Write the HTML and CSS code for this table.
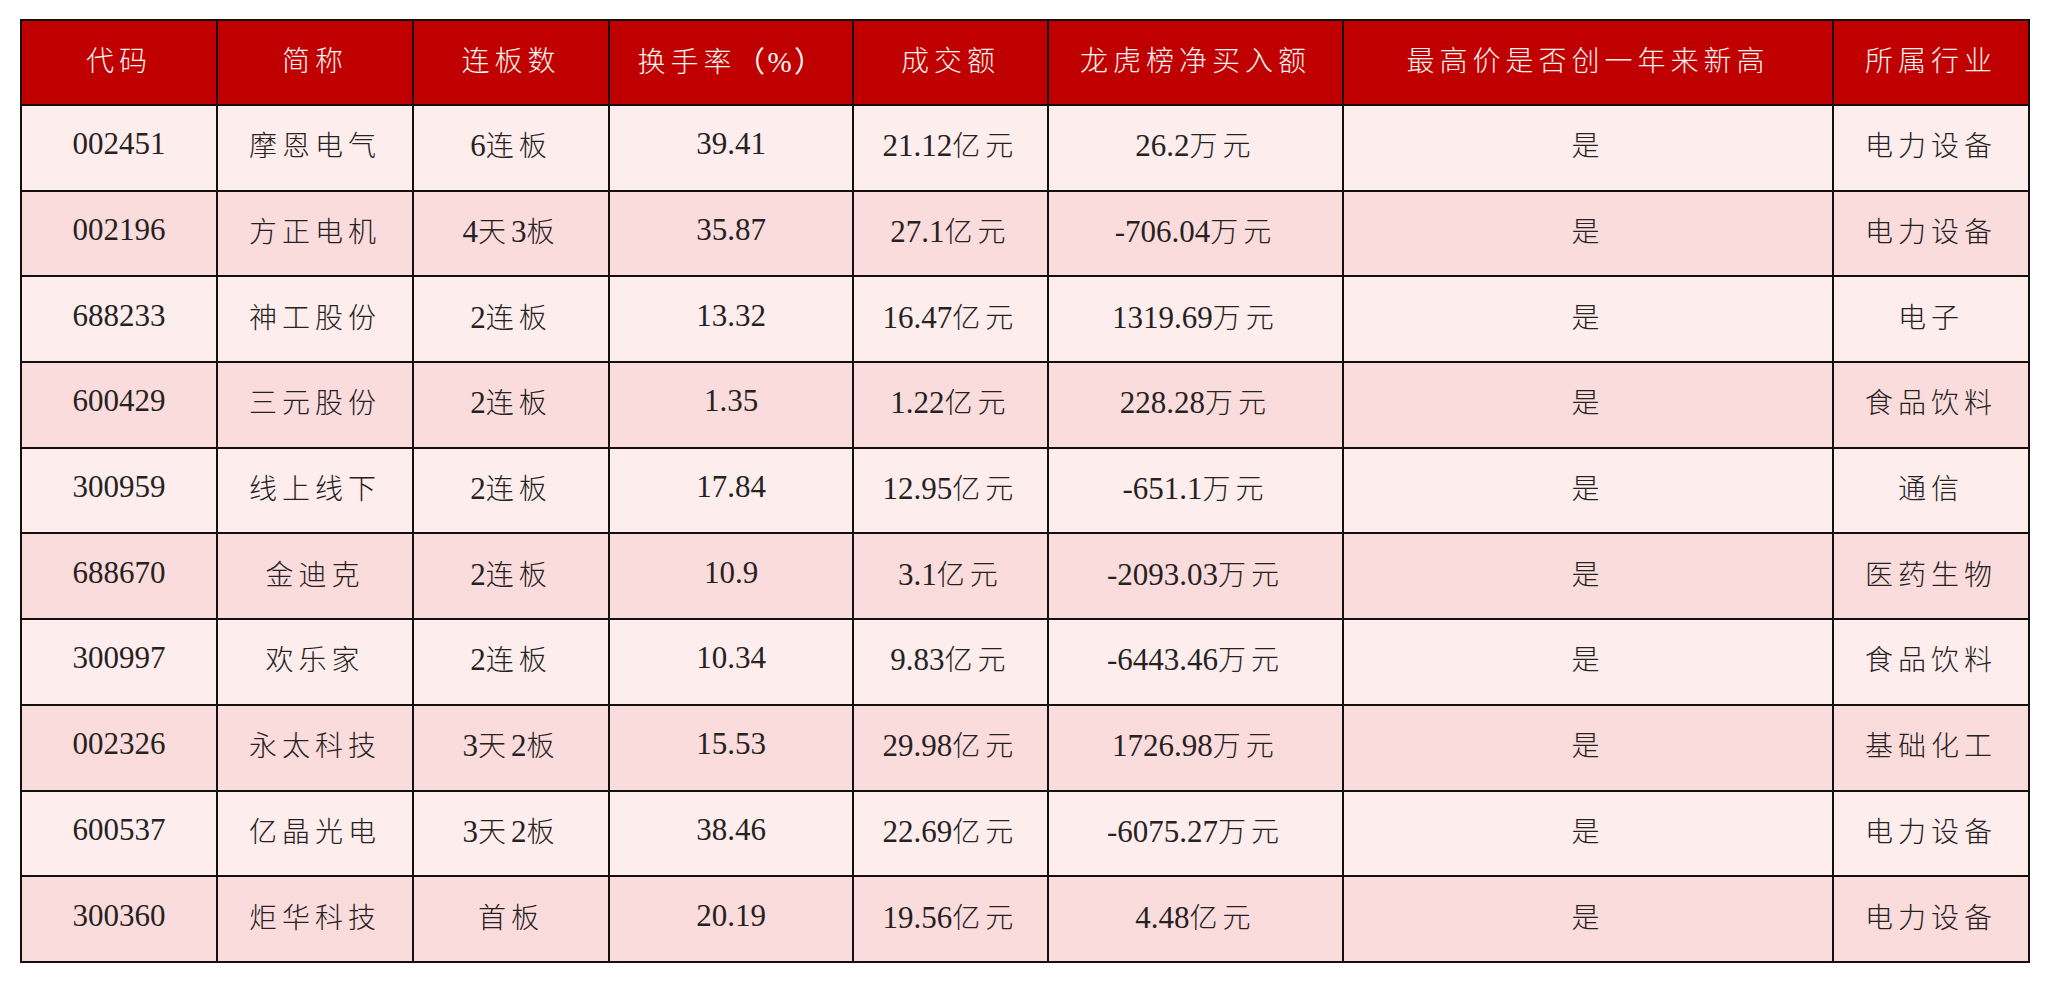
FILE: index.html
```html
<!DOCTYPE html>
<html lang="zh-CN">
<head>
<meta charset="utf-8">
<title>连板股一览</title>
<link rel="stylesheet" href="styles.css">
</head>
<body>
<table class="board">
  <colgroup>
    <col class="c-code"><col class="c-name"><col class="c-streak"><col class="c-turn"><col class="c-vol"><col class="c-lhb"><col class="c-high"><col class="c-ind">
  </colgroup>
  <thead>
    <tr>
      <th><span class="cj">代码</span></th>
      <th><span class="cj">简称</span></th>
      <th><span class="cj">连板数</span></th>
      <th><span class="cj">换手率</span><span class="pct">（%）</span></th>
      <th><span class="cj">成交额</span></th>
      <th><span class="cj">龙虎榜净买入额</span></th>
      <th><span class="cj">最高价是否创一年来新高</span></th>
      <th><span class="cj">所属行业</span></th>
    </tr>
  </thead>
  <tbody>
    <tr class="odd"><td>002451</td><td><span class="cj">摩恩电气</span></td><td>6<span class="cj">连板</span></td><td>39.41</td><td>21.12<span class="cj">亿元</span></td><td>26.2<span class="cj">万元</span></td><td><span class="cj">是</span></td><td><span class="cj">电力设备</span></td></tr>
    <tr class="even"><td>002196</td><td><span class="cj">方正电机</span></td><td>4<span class="cj">天</span>3<span class="cj">板</span></td><td>35.87</td><td>27.1<span class="cj">亿元</span></td><td>-706.04<span class="cj">万元</span></td><td><span class="cj">是</span></td><td><span class="cj">电力设备</span></td></tr>
    <tr class="odd"><td>688233</td><td><span class="cj">神工股份</span></td><td>2<span class="cj">连板</span></td><td>13.32</td><td>16.47<span class="cj">亿元</span></td><td>1319.69<span class="cj">万元</span></td><td><span class="cj">是</span></td><td><span class="cj">电子</span></td></tr>
    <tr class="even"><td>600429</td><td><span class="cj">三元股份</span></td><td>2<span class="cj">连板</span></td><td>1.35</td><td>1.22<span class="cj">亿元</span></td><td>228.28<span class="cj">万元</span></td><td><span class="cj">是</span></td><td><span class="cj">食品饮料</span></td></tr>
    <tr class="odd"><td>300959</td><td><span class="cj">线上线下</span></td><td>2<span class="cj">连板</span></td><td>17.84</td><td>12.95<span class="cj">亿元</span></td><td>-651.1<span class="cj">万元</span></td><td><span class="cj">是</span></td><td><span class="cj">通信</span></td></tr>
    <tr class="even"><td>688670</td><td><span class="cj">金迪克</span></td><td>2<span class="cj">连板</span></td><td>10.9</td><td>3.1<span class="cj">亿元</span></td><td>-2093.03<span class="cj">万元</span></td><td><span class="cj">是</span></td><td><span class="cj">医药生物</span></td></tr>
    <tr class="odd"><td>300997</td><td><span class="cj">欢乐家</span></td><td>2<span class="cj">连板</span></td><td>10.34</td><td>9.83<span class="cj">亿元</span></td><td>-6443.46<span class="cj">万元</span></td><td><span class="cj">是</span></td><td><span class="cj">食品饮料</span></td></tr>
    <tr class="even"><td>002326</td><td><span class="cj">永太科技</span></td><td>3<span class="cj">天</span>2<span class="cj">板</span></td><td>15.53</td><td>29.98<span class="cj">亿元</span></td><td>1726.98<span class="cj">万元</span></td><td><span class="cj">是</span></td><td><span class="cj">基础化工</span></td></tr>
    <tr class="odd"><td>600537</td><td><span class="cj">亿晶光电</span></td><td>3<span class="cj">天</span>2<span class="cj">板</span></td><td>38.46</td><td>22.69<span class="cj">亿元</span></td><td>-6075.27<span class="cj">万元</span></td><td><span class="cj">是</span></td><td><span class="cj">电力设备</span></td></tr>
    <tr class="even"><td>300360</td><td><span class="cj">炬华科技</span></td><td><span class="cj">首板</span></td><td>20.19</td><td>19.56<span class="cj">亿元</span></td><td>4.48<span class="cj">亿元</span></td><td><span class="cj">是</span></td><td><span class="cj">电力设备</span></td></tr>
  </tbody>
</table>
</body>
</html>
```
FILE: styles.css
```css
html, body {
  margin: 0;
  padding: 0;
  background: #ffffff;
}

body {
  padding: 19px 0 0 20px;
  font-family: "Liberation Serif", "Noto Sans CJK SC", serif;
  color: #262222;
}

.board {
  border-collapse: collapse;
  table-layout: fixed;
  width: 2008px;
  border: 2px solid #141010;
}

.c-code { width: 196px; }
.c-name { width: 196px; }
.c-streak { width: 196px; }
.c-turn { width: 244px; }
.c-vol { width: 195px; }
.c-lhb { width: 295px; }
.c-high { width: 490px; }
.c-ind { width: 196px; }

.board th,
.board td {
  border: 2px solid #141010;
  text-align: center;
  vertical-align: middle;
  padding: 0 0 7px 0;
  white-space: nowrap;
}

.board thead tr {
  height: 85px;
}

.board tbody tr {
  height: 85.7px;
}

.board th {
  background: #c00000;
  color: #fff3ef;
  font-weight: normal;
  font-size: 29px;
}

.board td {
  font-size: 31px;
}

.odd td {
  background: #fdeded;
}

.even td {
  background: #fbdcdd;
}

.cj {
  font-family: "Noto Sans CJK SC", sans-serif;
  font-weight: 300;
  font-size: 28px;
  letter-spacing: 5px;
}

.pct {
  font-family: "Liberation Serif", serif;
  font-size: 29px;
  letter-spacing: 2px;
}
```
